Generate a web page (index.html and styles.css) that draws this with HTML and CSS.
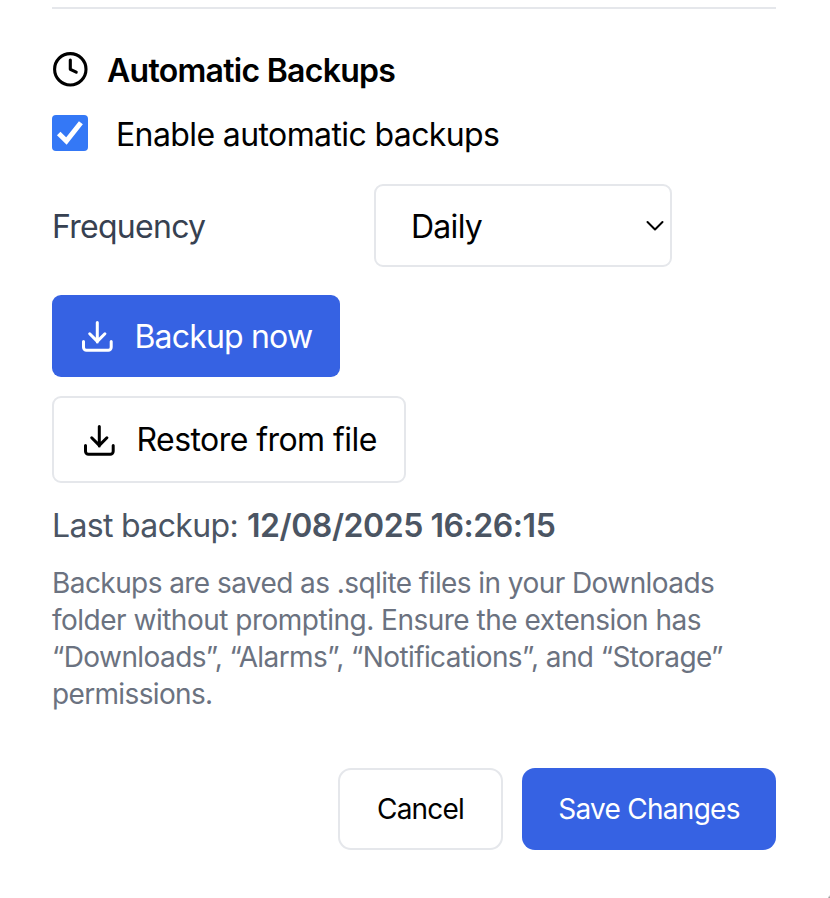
FILE: index.html
```html
<!DOCTYPE html>
<html lang="en">
<head>
<meta charset="utf-8">
<title>Automatic Backups</title>
<link rel="stylesheet" href="styles.css">
</head>
<body>
<main class="panel">
  <h2 class="heading">
    <svg class="clock" viewBox="0 0 36 36"><circle cx="18.3" cy="18.3" r="15.7"/><path d="M18.300 9v9.300l5.900 2.900"/></svg>
    <span class="t-heading">Automatic Backups</span>
  </h2>
  <label class="enable">
    <span class="checkbox"><svg viewBox="0 0 36 36"><path d="M6.700 18.500l7.700 7.500L28.900 7.800"/></svg></span>
    <span class="t-enable">Enable automatic backups</span>
  </label>
  <div class="frequency">
    <span class="t-frequency">Frequency</span>
    <div class="select"><span class="t-daily">Daily</span><svg viewBox="0 0 18 12"><path d="M1.500 2l7.500 7.500L16.500 2"/></svg></div>
  </div>
  <button class="btn primary backup"><svg class="download" viewBox="0 0 32 32"><path d="M16.300 2.500V22M8.700 13.800l7.600 7.600 7.600-7.600M2.500 21.500v5.800a3 3 0 0 0 3 3h21.700a3 3 0 0 0 3-3v-5.800"/></svg><span class="t-backup">Backup now</span></button>
  <button class="btn outline restore"><svg class="download" viewBox="0 0 32 32"><path d="M16.300 2.500V22M8.700 13.800l7.600 7.600 7.600-7.600M2.500 21.500v5.800a3 3 0 0 0 3 3h21.700a3 3 0 0 0 3-3v-5.800"/></svg><span class="t-restore">Restore from file</span></button>
  <p class="last"><span class="t-last">Last backup:</span> <strong class="t-date">12/08/2025 16:26:15</strong></p>
  <p class="note"><span class="n1">Backups are saved as .sqlite files in your Downloads</span><br><span class="n2">folder without prompting. Ensure the extension has</span><br><span class="n3">“Downloads”, “Alarms”, “Notifications”, and “Storage”</span><br><span class="n4">permissions.</span></p>
  <footer class="actions">
    <button class="btn outline cancel"><span class="t-cancel">Cancel</span></button>
    <button class="btn primary save"><span class="t-save">Save Changes</span></button>
  </footer>
</main>
<span class="grip"></span>
</body>
</html>
```
FILE: styles.css
```css
* { box-sizing: border-box; }
body { margin: 0; background: #fff; color: #000; font-family: Inter, sans-serif; font-weight: 430; }
svg { fill: none; stroke: currentColor; stroke-width: 2; stroke-linecap: round; stroke-linejoin: round; flex: none; display: block; }
.panel { margin: 7px 54px 0 52px; border-top: 2px solid #e5e7eb; padding-top: 39px; display: flex; flex-direction: column; align-items: flex-start; }
.heading { margin: 0; height: 42px; display: flex; align-items: center; gap: 19px; font-size: 32px; font-weight: 580; white-space: nowrap; }
.t-heading { padding-top: 2px; }
.clock { width: 36px; height: 36px; stroke-width: 3.100; }
.enable { display: flex; align-items: center; gap: 28px; height: 42px; margin-top: 23px; font-size: 32px; white-space: nowrap; }
.checkbox { width: 36px; height: 36px; margin-bottom: 2px; border-radius: 4px; background: #3478f6; color: #fff; }
.checkbox svg { stroke-width: 5; stroke-linecap: butt; stroke-linejoin: miter; }
.frequency { display: grid; grid-template-columns: 322px 298px; align-items: center; margin-top: 29px; height: 83px; font-size: 32px; color: #374151; }
.t-frequency { padding-top: 2px; }
.select { height: 83px; border: 2px solid #e5e7eb; border-radius: 9px; padding: 0 6px 0 35px; display: flex; align-items: center; justify-content: space-between; color: #000; }
.t-daily { padding-top: 2px; }
.select svg { width: 18px; height: 12px; }
.btn { display: flex; align-items: center; font: 430 32px Inter, sans-serif; border-radius: 9px; white-space: nowrap; padding: 0 29px; }
.primary { background: #3662e3; color: #fff; border: 0; }
.outline { background: #fff; color: #000; border: 2px solid #e5e7eb; }
.download { width: 32px; height: 32px; margin-right: 21.500px; stroke-width: 3; }
.backup { width: 288px; height: 82px; margin-top: 28px; }
.restore { width: 354px; height: 87px; margin-top: 19px; }
.last { margin: 22px 0 0; font-size: 32px; line-height: 42px; color: #4b5563; white-space: nowrap; }
.last strong { font-weight: 580; }
.note { margin: 18px 0 0; font-size: 28px; line-height: 37px; color: #6b7280; white-space: nowrap; }
.actions { align-self: flex-end; display: flex; gap: 19px; margin-top: 55px; }
.actions .btn { height: 82px; font-size: 28px; justify-content: center; border-radius: 13px; padding: 0; }
.cancel { width: 165px; }
.save { width: 254px; }
.t-heading { letter-spacing: -0.720px; }
.t-enable { letter-spacing: -0.610px; }
.t-frequency, .t-daily { letter-spacing: -0.720px; }
.t-backup { letter-spacing: -0.820px; }
.t-restore { letter-spacing: -0.560px; }
.t-last { letter-spacing: -0.660px; }
.t-date { letter-spacing: -0.450px; }
.n1 { letter-spacing: -0.570px; }
.n2 { letter-spacing: -0.500px; }
.n3 { letter-spacing: -0.590px; }
.n4 { letter-spacing: -0.650px; }
.t-cancel { letter-spacing: -0.800px; }
.t-save { letter-spacing: -0.730px; }
.grip { position: absolute; right: 0; bottom: 0; width: 2px; height: 3px; background: linear-gradient(135deg, #fff 30%, #777 100%); }
```
